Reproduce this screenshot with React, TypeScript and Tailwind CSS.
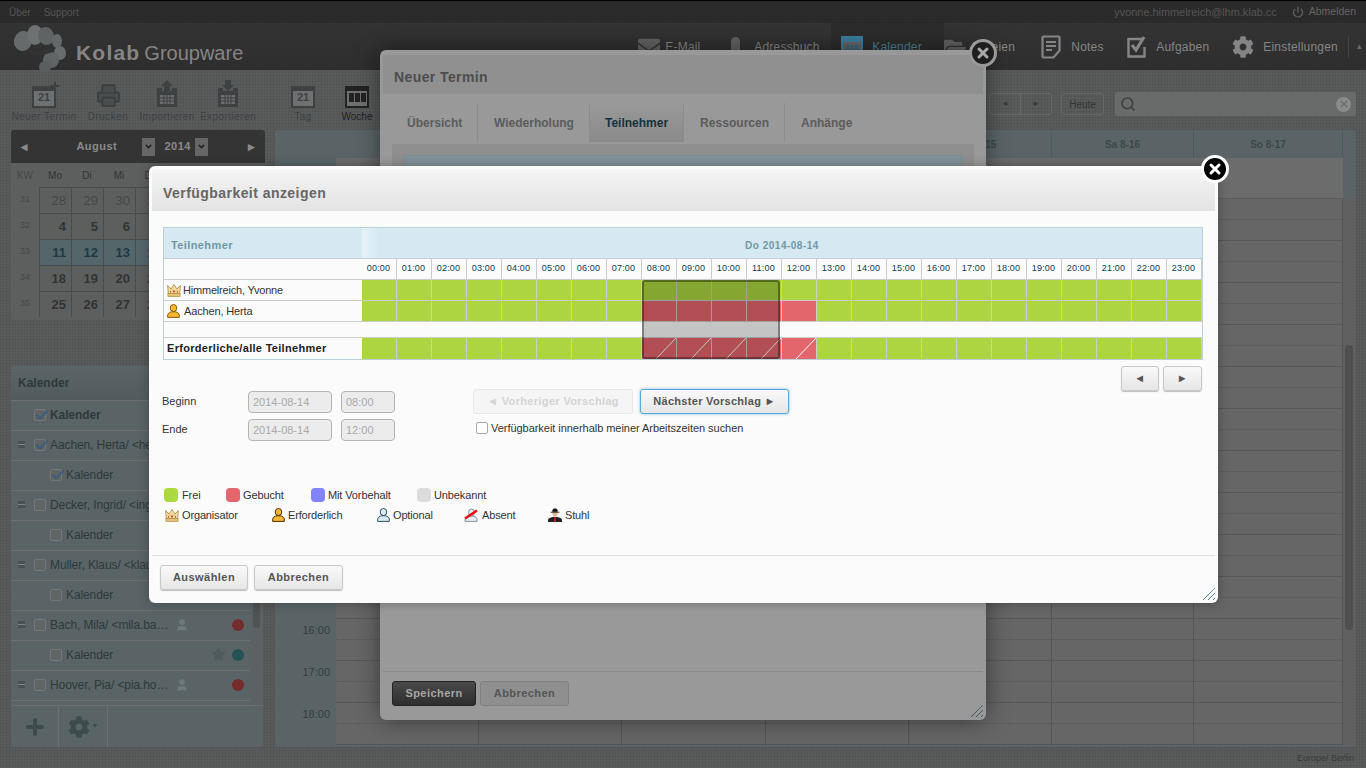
import { Check, Plus, Printer, Search, X, Star, User, Power, ChevronDown } from 'lucide-react'
import { FaCog, FaEnvelope, FaFolderOpen } from 'react-icons/fa'

const hours = Array.from({ length: 24 }, (_, i) => `${String(i).padStart(2, '0')}:00`)
const calendarRows = ['06', '07', '08', '09', '10', '11', '12', '13', '14', '15', '16', '17', '18']
const texture = 'bg-[linear-gradient(rgba(0,0,0,.05)_1px,transparent_1px),linear-gradient(90deg,rgba(0,0,0,.05)_1px,transparent_1px)] bg-[size:3px_3px]'

function Crown({ className = '' }: { className?: string }) {
  return (
    <svg viewBox="0 0 14 13" className={`h-[13px] w-[14px] ${className}`}>
      <path d="M.6 1.5L4 5 7 .6 10 5l3.4-3.5L12.6 10H1.4z" fill="#f3dca0" stroke="#b58f45" strokeWidth=".9" />
      <rect x=".9" y="9.6" width="12.2" height="3" fill="#e6c279" stroke="#a8853c" strokeWidth=".6" />
      <path d="M3 6.5h8" stroke="#e8c987" strokeWidth="1.5" />
      <circle cx="7" cy="7.5" r="1" fill="#c0392b" />
      <circle cx="3.6" cy="8" r=".7" fill="#c0392b" />
      <circle cx="10.4" cy="8" r=".7" fill="#c0392b" />
    </svg>
  )
}

function Person({ fill, stroke }: { fill: string; stroke: string }) {
  return (
    <svg viewBox="0 0 13 14" className="h-[14px] w-[13px]">
      <ellipse cx="6.5" cy="4" rx="3.3" ry="3.5" fill={fill} stroke={stroke} strokeWidth="1" />
      <path d="M.7 13.4v-2.2c0-2 2.4-3 3.6-3.4h4.4c1.2.4 3.6 1.4 3.6 3.4v2.2z" fill={fill} stroke={stroke} strokeWidth="1" />
    </svg>
  )
}

function Absent() {
  return (
    <svg viewBox="0 0 14 14" className="h-[14px] w-[14px]">
      <ellipse cx="7.5" cy="4.5" rx="3" ry="3.5" fill="#e4edf2" stroke="#6b7b85" strokeWidth=".8" />
      <path d="M1 13.4v-2c0-2 2.5-2.8 4-3.2h5c1.2.4 3 1.2 3 3.2v2z" fill="#e4edf2" stroke="#6b7b85" strokeWidth=".8" />
      <path d="M1 10.5L13 2.5" stroke="#ee0d0d" strokeWidth="2.4" />
    </svg>
  )
}

function Chair() {
  return (
    <svg viewBox="0 0 14 14" className="h-[14px] w-[14px]">
      <path d="M0 14v-2.2c0-1.5 2.6-2.3 4.5-2.8h5c1.9.5 4.5 1.3 4.5 2.8V14z" fill="#222" />
      <ellipse cx="7" cy="5.4" rx="2.6" ry="3" fill="#e5b894" />
      <path d="M2.6 3.8h8.8v.8H2.6z" fill="#111" />
      <path d="M4.2 3.8C4.2 1.6 5.2.6 7 .6s2.8 1 2.8 3.2z" fill="#111" />
      <path d="M6.2 9h1.6v5H6.2z" fill="#d21f1f" />
    </svg>
  )
}

function Logo() {
  return (
    <svg viewBox="0 0 56 50" className="h-[50px] w-[56px]">
      <ellipse cx="10" cy="17" rx="9" ry="10" transform="rotate(15 10 17)" fill="#666a6b" />
      <ellipse cx="22" cy="11" rx="8" ry="10" fill="#6e7172" />
      <ellipse cx="33" cy="12" rx="8" ry="9" transform="rotate(-20 33 12)" fill="#5f6364" />
      <ellipse cx="44" cy="17" rx="5" ry="7" fill="#656869" />
      <ellipse cx="47" cy="29" rx="6" ry="7" fill="#686c6d" />
      <ellipse cx="38" cy="36" rx="8" ry="8" fill="#606465" />
      <ellipse cx="32" cy="43" rx="6" ry="6" fill="#5a5e5f" />
      <path d="M16 25c6 4 13 3 20-1l3 4c-7 3-15 4-22 1z" fill="#343434" />
    </svg>
  )
}

function CalIcon({ dark = false, week = false }: { dark?: boolean; week?: boolean }) {
  return (
    <div className={`flex h-[22px] w-[24px] flex-col items-center border-2 border-t-[5px] ${dark ? 'border-[#222]' : 'border-[#3e4142]'} bg-[#6e7071]`}>
      {week ? (
        <div className="mt-[2px] flex gap-[1px]">
          <div className="h-[9px] w-[5px] bg-[#222]" />
          <div className="h-[9px] w-[5px] bg-[#222]" />
          <div className="h-[9px] w-[5px] bg-[#222]" />
        </div>
      ) : (
        <span className="text-[11px] leading-[13px] font-bold text-[#3e4142]">21</span>
      )}
    </div>
  )
}

function BlueCalIcon() {
  return (
    <svg viewBox="0 0 22 22" className="h-[22px] w-[22px]">
      <rect x="0" y="0" width="22" height="22" fill="#3c7d9c" />
      <rect x="2" y="6" width="18" height="14" fill="#666" />
      <path d="M4 10h14M4 13h14M4 16h14M7 9v9M11 9v9M15 9v9" stroke="#2f6780" strokeWidth="1.2" />
    </svg>
  )
}

function NotesIcon() {
  return (
    <svg viewBox="0 0 20 24" className="h-[24px] w-[20px]">
      <path d="M2.5 1.5h15a1 1 0 011 1v13l-6 7h-10a1 1 0 01-1-1v-19a1 1 0 011-1z" fill="none" stroke="#858585" strokeWidth="2.2" />
      <path d="M5 7h10M5 11h10M5 15h6" stroke="#858585" strokeWidth="2" />
    </svg>
  )
}

function TasksIcon() {
  return (
    <svg viewBox="0 0 21 22" className="h-[22px] w-[21px]">
      <path d="M15 3H1.5v17.500h16V11" fill="none" stroke="#858585" strokeWidth="2.4" />
      <path d="M5 9l4 5 8-13" fill="none" stroke="#858585" strokeWidth="3.2" />
    </svg>
  )
}

function ArrowCal({ up }: { up: boolean }) {
  return (
    <svg viewBox="0 0 22 28" className="h-[28px] w-[22px]">
      <path d={up ? 'M11 0l6 6h-3v5H8V6H5z' : 'M8 0h6v5h3l-6 6-6-6h3z'} fill="#3e4142" />
      <path d="M1 8h5v3h10V8h5v19H1z" fill="#3e4142" />
      <rect x="4" y="15" width="14" height="9" fill="#6b6d6e" />
      <path d="M4 18h14M4 21h14M8 15v9M11 15v9M14 15v9" stroke="#3e4142" strokeWidth="1" />
    </svg>
  )
}

function ToolItem({ label, icon, width, bold = false }: { label: string; icon: React.ReactNode; width: string; bold?: boolean }) {
  return (
    <div className={`flex flex-col items-center ${width}`}>
      <div className="flex h-[28px] items-end">{icon}</div>
      <span className={`mt-[3px] whitespace-nowrap text-[10px] leading-[12px] ${bold ? 'text-[#222]' : 'tracking-[0.45px] text-[#3e4142]'}`}>{label}</span>
    </div>
  )
}

function NavItem({ label, icon, width, gap = 'gap-[9px]', active = false }: { label: string; icon: React.ReactNode; width: string; gap?: string; active?: boolean }) {
  return (
    <div className={`flex h-[47px] items-center ${gap} ${width} ${active ? 'bg-[#2c2c2c] shadow-[-10px_0_0_#2c2c2c]' : ''}`}>
      {icon}
      <span className={`mt-[1px] text-[12px] tracking-[0.2px] ${active ? 'text-[#4f8296]' : 'text-[#858585]'}`}>{label}</span>
    </div>
  )
}

function CloseBtn({ className, dim = false }: { className: string; dim?: boolean }) {
  return (
    <div className={`absolute flex h-[28px] w-[28px] items-center justify-center rounded-full border-[3px] ${dim ? 'border-[#999] bg-[#1e1e1e]' : 'border-white bg-black'} ${className}`}>
      <X size={16} strokeWidth={4.5} color={dim ? '#aaa' : '#fff'} />
    </div>
  )
}

function Grip({ className, color }: { className: string; color: string }) {
  return (
    <svg viewBox="0 0 12 12" className={`absolute h-[12px] w-[12px] ${className}`}>
      <path d="M0 12L12 0M5 12l7-7M10 12l2-2" stroke={color} strokeWidth="1" strokeDasharray="1 .5" />
    </svg>
  )
}

function SideRow({ label, nested = false, top = false, checked = false, bold = false, person = false, star = false, dot }: {
  label: string; nested?: boolean; top?: boolean; checked?: boolean; bold?: boolean; person?: boolean; star?: boolean; dot?: string
}) {
  return (
    <div className="relative flex h-[30px] items-center border-t border-[#6c6f6d] bg-[#5a6466] pb-[2px] text-[12px] tracking-[-0.1px] text-[#2e393c]">
      {top && <div className="absolute left-[7px] top-[10px] h-[7px] w-[7px] bg-[#485153] after:mt-[3px] after:block after:h-[1px] after:bg-[#7d8587]" />}
      <div className={`relative h-[12px] w-[12px] shrink-0 rounded-[2px] border border-[#757778] bg-[#5f6465] ${nested ? 'ml-[39px]' : 'ml-[23px]'}`}>
        {checked && <Check size={16} strokeWidth={3} color="#3d5c7a" className="absolute -top-[3px] -left-[1px]" />}
      </div>
      <span className={`ml-[4px] max-w-[120px] truncate ${bold ? 'font-bold' : ''}`}>{label}</span>
      {person && <User size={14} fill="#6f7a7c" color="#6f7a7c" className="absolute left-[164px]" />}
      {star && <Star size={15} fill="#4f5b5d" color="#4f5b5d" className="absolute left-[200px]" />}
      {dot && <div className={`absolute left-[221px] h-[12px] w-[12px] rounded-full ${dot}`} />}
    </div>
  )
}

function Swatch({ color, label, width, gap = 'gap-[3px]' }: { color: string; label: string; width: string; gap?: string }) {
  return (
    <div className={`flex items-center ${gap} ${width}`}>
      <div className={`h-[14px] w-[14px] rounded-[4px] ${color}`} />
      <span className="tracking-[-0.12px]">{label}</span>
    </div>
  )
}

function Role({ icon, label, width, gap = 'gap-[3px]' }: { icon: React.ReactNode; label: string; width: string; gap?: string }) {
  return (
    <div className={`flex items-center ${gap} ${width}`}>
      {icon}
      <span className="tracking-[-0.15px]">{label}</span>
    </div>
  )
}

const grayBtn = 'rounded-[3px] border border-[#c8c8c8] bg-gradient-to-b from-[#f9f9f9] to-[#e6e6e6] text-[11px] font-bold tracking-[0.45px] text-[#555] shadow-[0_1px_1px_rgba(0,0,0,.25)]'

function AvailabilityTable() {
  return (
    <div className="relative w-[1040px] border border-[#bdd0da]">
      <div className="flex h-[30px] bg-[#d6e9f2]">
        <div className="flex w-[198px] items-center pl-[7px] pt-[4px] text-[11px] font-bold tracking-[0.4px] text-[#6f98a6]">Teilnehmer</div>
        <div className="flex flex-1 items-center justify-center bg-gradient-to-r from-[#e6f2f7] to-[#d6e9f2] to-[2%] pt-[4px] text-[10px] font-bold tracking-[0.5px] text-[#6f98a6]">Do 2014-08-14</div>
      </div>
      <div className="flex h-[22px] border-t border-b border-[#ccc]">
        <div className="w-[198px]" />
        {hours.map(h => (
          <div key={h} className="flex w-[35px] items-center justify-center border-r border-[#ccc] pr-[1px] text-[9px] tracking-[0.2px] text-[#0a3d52]">{h}</div>
        ))}
      </div>
      <GridRow name={<><Crown /><span className="ml-[2px] tracking-[-0.2px]">Himmelreich, Yvonne</span></>} />
      <GridRow name={<><Person fill="#f7b733" stroke="#8a5a00" /><span className="ml-[4px] tracking-[-0.15px]">Aachen, Herta</span></>} busy />
      <div className="h-[16px] border-b border-[#ccc]" />
      <GridRow name={<span className="text-[11px] font-bold tracking-[0.3px] text-[#222]">Erforderliche/alle Teilnehmer</span>} busy slash last />
      <div className="absolute left-[478px] top-[52px] h-[79px] w-[138px] rounded-[3px] border-2 border-[rgba(0,0,0,.36)] bg-[rgba(0,0,0,.22)]" />
    </div>
  )
}

function GridRow({ name, busy = false, slash = false, last = false }: { name: React.ReactNode; busy?: boolean; slash?: boolean; last?: boolean }) {
  return (
    <div className={`flex h-[21px] border-[#ccc] ${last ? 'border-b-0' : 'border-b'}`}>
      <div className="flex w-[198px] items-center whitespace-nowrap pl-[3px] text-[11px] text-[#333]">{name}</div>
      {hours.map((h, i) => {
        const red = busy && i >= 8 && i <= 12
        return (
          <div key={h} className={`relative w-[35px] border-r border-[#ccc] ${red ? 'bg-[#e4666d]' : 'bg-[#acd540]'}`}>
            {red && slash && (
              <svg viewBox="0 0 34 21" className="absolute inset-0 h-full w-full">
                <path d="M14 21L34 0" stroke="#fff" strokeWidth="1" />
              </svg>
            )}
          </div>
        )
      })}
    </div>
  )
}

function AvailabilityDialog() {
  return (
    <div className="absolute left-[149px] top-[166px] h-[437px] w-[1069px] rounded-[6px] bg-[#fbfbfb] pt-[3px] text-[11px] text-[#333] shadow-[0_0_12px_rgba(0,0,0,.3)]">
      <CloseBtn className="-right-[11px] -top-[11px]" />
      <div className="mx-[3px] flex h-[42px] items-center bg-gradient-to-b from-[#f4f4f4] to-[#e3e3e3] pl-[11px] pt-[6px] text-[14px] font-bold tracking-[0.45px] text-[#666]">Verfügbarkeit anzeigen</div>
      <div className="pl-[14px] pt-[16px]">
        <AvailabilityTable />
        <div className="mt-[6px] flex justify-end gap-[4px] pr-[16px]">
          <div className={`flex h-[25px] w-[38px] items-center justify-center ${grayBtn}`}>◄</div>
          <div className={`flex h-[25px] w-[39px] items-center justify-center ${grayBtn}`}>►</div>
        </div>
        <div className="-ml-[1px] flex items-start">
          <div className="flex flex-col gap-[6px]">
            {[['Beginn', '08:00'], ['Ende', '12:00']].map(([label, time]) => (
              <div key={label} className="flex h-[22px] items-center">
                <span className="w-[86px] -translate-y-[1px]">{label}</span>
                <div className="flex h-[22px] w-[84px] items-center rounded-[4px] border border-[#b4b4b4] bg-[#ececec] pl-[4px] text-[#aaa]">2014-08-14</div>
                <div className="ml-[9px] flex h-[22px] w-[54px] items-center rounded-[4px] border border-[#b4b4b4] bg-[#ececec] pl-[4px] text-[#aaa]">{time}</div>
              </div>
            ))}
          </div>
          <div className="ml-[78px] -mt-[2px]">
            <div className="flex gap-[7px]">
              <div className="flex h-[25px] w-[160px] items-center justify-center rounded-[3px] border border-[#e8e8e8] bg-[#f5f5f5] text-[11px] font-bold tracking-[0.35px] text-[#d4d4d4]">◄ Vorheriger Vorschlag</div>
              <div className="flex h-[25px] w-[149px] items-center justify-center rounded-[3px] border border-[#58a9d6] bg-gradient-to-b from-[#f9f9f9] to-[#e6e6e6] text-[11px] font-bold tracking-[0.3px] text-[#555] shadow-[0_0_3px_rgba(71,160,210,.7)]">Nächster Vorschlag ►</div>
            </div>
            <div className="mt-[6px] ml-[3px] flex items-center gap-[3px]">
              <div className="h-[12px] w-[12px] rounded-[2px] border border-[#aaa] bg-white" />
              <span className="tracking-[-0.04px]">Verfügbarkeit innerhalb meiner Arbeitszeiten suchen</span>
            </div>
          </div>
        </div>
        <div className="mt-[47px] flex h-[14px] items-center pl-[1px]">
          <Swatch color="bg-[#acd93f]" label="Frei" width="w-[62px]" gap="gap-[4px]" />
          <Swatch color="bg-[#e4666d]" label="Gebucht" width="w-[85px]" />
          <Swatch color="bg-[#8383fb]" label="Mit Vorbehalt" width="w-[106px]" />
          <Swatch color="bg-[#dcdcdc]" label="Unbekannt" width="w-[100px]" />
        </div>
        <div className="mt-[6px] flex h-[14px] items-center pl-[3px]">
          <Role icon={<Crown className="-ml-[1px]" />} label="Organisator" width="w-[106px]" />
          <Role icon={<Person fill="#f7b733" stroke="#4a3000" />} label="Erforderlich" width="w-[105px]" />
          <Role icon={<Person fill="#d9eaf3" stroke="#31505e" />} label="Optional" width="w-[87px]" />
          <Role icon={<Absent />} label="Absent" width="w-[84px]" gap="gap-[4px]" />
          <Role icon={<Chair />} label="Stuhl" width="w-[80px]" />
        </div>
      </div>
      <div className="mx-[3px] mt-[33px] h-px bg-[#dedede]" />
      <div className="flex gap-[6px] pl-[11px] pt-[9px]">
        <div className={`flex h-[25px] w-[88px] items-center justify-center ${grayBtn}`}>Auswählen</div>
        <div className={`flex h-[25px] w-[89px] items-center justify-center ${grayBtn}`}>Abbrechen</div>
      </div>
      <Grip className="bottom-[3px] right-[3px]" color="#14475c" />
    </div>
  )
}

function AppointmentDialog() {
  return (
    <div className="absolute left-[380px] top-[50px] h-[670px] w-[606px] rounded-[6px] bg-[#999] pt-[5px] shadow-[0_0_24px_rgba(0,0,0,.45)]">
      <CloseBtn className="-right-[11px] -top-[11px]" dim />
      <div className="mx-[3px] flex h-[39px] items-center bg-[#909090] pl-[11px] pt-[5px] text-[14px] font-bold tracking-[0.4px] text-[#4d4d4d]">Neuer Termin</div>
      <div className="mt-[9px] flex h-[41px] items-center px-[11px] pb-[2px] text-[12px] font-bold text-[#5c5c5c]">
        <div className="flex h-full w-[87px] items-center border-r border-[#8c8c8c] pl-[16px]">Übersicht</div>
        <div className="flex h-full w-[112px] items-center border-r border-[#8c8c8c] pl-[16px]">Wiederholung</div>
        <div className="flex h-full w-[94px] items-center border-r border-[#8c8c8c] bg-gradient-to-b from-[#999] to-[#8a8a8a] pl-[15px] text-[#15323d]">Teilnehmer</div>
        <div className="flex h-full w-[101px] items-center border-r border-[#8c8c8c] pl-[16px] tracking-[0.05px]">Ressourcen</div>
        <div className="flex h-full items-center pl-[16px]">Anhänge</div>
      </div>
      <div className="mx-[12px] h-[60px] bg-[#8f8f8f] px-[12px] pt-[11px]">
        <div className="h-[40px] border border-[#7b8f98] bg-[#83939a]" />
      </div>
      <div className="mx-[3px] mt-[467px] h-px bg-[#888]" />
      <div className="flex gap-[4px] pl-[12px] pt-[9px] text-[11px] font-bold tracking-[0.45px]">
        <div className="flex h-[25px] w-[84px] items-center justify-center rounded-[3px] border border-[#222] bg-gradient-to-b from-[#4a4a4a] to-[#2e2e2e] text-[#a5a5a5]">Speichern</div>
        <div className="flex h-[25px] w-[89px] items-center justify-center rounded-[3px] border border-[#808080] bg-[#8f8f8f] text-[#555]">Abbrechen</div>
      </div>
      <Grip className="bottom-[3px] right-[3px]" color="#1e3c49" />
    </div>
  )
}

function MiniCalendar() {
  const weeks = [
    ['31', ['28', '29', '30', '31', '1', '2', '3']],
    ['32', ['4', '5', '6', '7', '8', '9', '10']],
    ['33', ['11', '12', '13', '14', '15', '16', '17']],
    ['34', ['18', '19', '20', '21', '22', '23', '24']],
    ['35', ['25', '26', '27', '28', '29', '30', '31']],
  ] as [string, string[]][]
  return (
    <div className="h-[190px] w-[254px] overflow-hidden rounded-[3px] bg-[#5d5f5f]">
      <div className="flex h-[33px] items-center bg-[#343434] px-[7px] text-[11px] font-bold tracking-[0.5px] text-[#8a8a8a]">
        <span className="text-[12px]">◄</span>
        <span className="ml-[46px] w-[66px]">August</span>
        <div className="flex h-[18px] w-[13px] items-center justify-center bg-[#666]"><ChevronDown size={9} strokeWidth={4} color="#222" /></div>
        <span className="ml-[9px]">2014</span>
        <div className="ml-[4px] flex h-[18px] w-[13px] items-center justify-center bg-[#666]"><ChevronDown size={9} strokeWidth={4} color="#222" /></div>
        <span className="ml-auto text-[12px]">►</span>
      </div>
      <div className="flex h-[24px] items-center text-[10px] text-[#333]">
        <span className="w-[28px] text-center text-[#454747]">KW</span>
        {['Mo', 'Di', 'Mi', 'Do', 'Fr', 'Sa', 'So'].map(d => (
          <span key={d} className="w-[32px] text-center">{d}</span>
        ))}
      </div>
      {weeks.map(([kw, days], w) => (
        <div key={kw} className="flex h-[26px] items-center">
          <span className="w-[28px] text-center text-[9px] text-[#454747]">{kw}</span>
          {days.map(d => (
            <div key={d} className={`flex h-[26px] w-[32px] items-center justify-end border-t border-l border-[#4a4c4c] pr-[5px] text-[13px] ${w === 0 ? 'text-[#454747]' : 'font-bold text-[#333]'} ${w === 2 ? 'bg-[#55666b] text-[#203942]' : ''}`}>{d}</div>
          ))}
        </div>
      ))}
    </div>
  )
}

function CalendarList() {
  return (
    <div className="mt-[46px] flex h-[381px] w-[252px] flex-col overflow-hidden rounded-[3px] bg-[#5c6163]">
      <div className="flex h-[34px] items-center bg-gradient-to-b from-[#5b6567] to-[#525c5f] pl-[7px] text-[12px] font-bold text-[#2e393c]">Kalender</div>
      <div className="relative flex h-[305px]">
        <div className="w-[239px] overflow-hidden">
          <SideRow label="Kalender" bold checked />
          <SideRow label="Aachen, Herta/ <herta.aachen@lhm" top checked />
          <SideRow label="Kalender" nested checked />
          <SideRow label="Decker, Ingrid/ <ingrid.decker@lhm" top />
          <SideRow label="Kalender" nested />
          <SideRow label="Muller, Klaus/ <klaus.muller@lhm" top />
          <SideRow label="Kalender" nested />
          <SideRow label="Bach, Mila/ <mila.bach@lhm" top person dot="bg-[#752c2c]" />
          <SideRow label="Kalender" nested star dot="bg-[#255254]" />
          <SideRow label="Hoover, Pia/ <pia.hoover@lhm" top person dot="bg-[#752c2c]" />
          <SideRow label="" nested />
        </div>
        <div className="absolute right-[3px] top-[150px] h-[78px] w-[7px] rounded-b-[4px] bg-[#4f5354]" />
      </div>
      <div className="flex h-[42px] border-t border-[#6c6f6d] bg-[#5a6466]">
        <div className="flex w-[48px] items-center justify-center border-r border-[#6c6f6d]"><Plus size={24} strokeWidth={4} color="#3e4b4e" /></div>
        <div className="flex w-[49px] items-center justify-center gap-[2px] border-r border-[#6c6f6d]"><FaCog size={22} color="#3e4b4e" /><span className="text-[7px] text-[#3e4b4e]">▼</span></div>
      </div>
    </div>
  )
}

function WeekGrid() {
  const colW = ['w-[143px]', 'w-[143px]', 'w-[144px]', 'w-[143px]', 'w-[143px]', 'w-[142px]', 'w-[149px]']
  const labels = ['Mo 8-11', 'Di 8-12', 'Mi 8-13', 'Do 8-14', 'Fr 8-15', 'Sa 8-16', 'So 8-17']
  return (
    <div className="ml-[10px] flex h-[617px] w-[1081px] flex-col overflow-hidden rounded-[3px] bg-[#5a6466]">
      <div className="flex h-[28px] pl-[61px] text-[10px] font-bold text-[#3d484a]">
        {labels.map((l, i) => (
          <div key={l} className={`flex items-center justify-center border-r border-[#4f5a5c] ${colW[i]}`}>{l}</div>
        ))}
      </div>
      <div className="flex h-[41px] pl-[61px]">
        <div className="w-[1007px] border-b border-[#5c5c5c] bg-[#6c6c6c]" />
      </div>
      <div className="flex">
        <div className="w-[61px] text-right text-[11px] text-[#333d3f]">
          {calendarRows.map(r => (
            <div key={r} className="h-[42px] pr-[6px] pt-[3px]">{r}:00</div>
          ))}
        </div>
        <div className="flex w-[1007px] bg-[#666]">
          {colW.map((w, i) => (
            <div key={i} className={`border-r border-[#555] ${w}`}>
              {calendarRows.map(r => (
                <div key={r} className="h-[42px] border-b border-[#585858]">
                  <div className="h-[21px] border-b border-dotted border-[#565656]" />
                </div>
              ))}
            </div>
          ))}
        </div>
        <div className="relative w-[13px] bg-[#606060]">
          <div className="absolute left-[2px] top-[146px] h-[285px] w-[8px] rounded-[4px] bg-[#4f4f4f]" />
        </div>
      </div>
    </div>
  )
}

export default function App() {
  return (
    <div className={`relative h-[768px] w-[1366px] overflow-hidden bg-[#5a5c5c] font-['Liberation_Sans',Arial,sans-serif] ${texture}`}>
      <div className={`flex h-[23px] items-center border-t border-black bg-[#2c2c2c] pl-[9px] pr-[10px] text-[10px] text-[#555] ${texture}`}>
        <span>Über</span>
        <span className="ml-[13px]">Support</span>
        <span className="ml-auto text-[10.900px]">yvonne.himmelreich@lhm.klab.cc</span>
        <Power size={12} strokeWidth={2.5} color="#666" className="ml-[15px]" />
        <span className="ml-[5px] text-[10.500px] text-[#666]">Abmelden</span>
      </div>
      <div className="flex h-[47px] items-center bg-gradient-to-b from-[#333] to-[#2e2e2e]">
        <div className="ml-[13px] mt-[5px]"><Logo /></div>
        <span className="ml-[7px] mt-[13px] text-[21px] font-bold tracking-[1.2px] text-[#858585]">Kolab</span>
        <span className="ml-[4px] mt-[13px] text-[20px] text-[#858585]">Groupware</span>
        <div className="ml-[395px] flex">
          <NavItem label="E-Mail" icon={<FaEnvelope size={22} color="#626262" />} width="w-[93px]" gap="gap-[5px]" />
          <NavItem label="Adressbuch" icon={<div className="h-[20px] w-[9px] rounded-t-[5px] bg-[#626262]" />} width="w-[110px]" gap="gap-[14px]" />
          <NavItem label="Kalender" icon={<BlueCalIcon />} width="w-[103px]" active />
          <NavItem label="Dateien" icon={<FaFolderOpen size={22} color="#626262" />} width="w-[97px]" gap="gap-[6px]" />
          <NavItem label="Notes" icon={<NotesIcon />} width="w-[86px]" gap="gap-[10px]" />
          <NavItem label="Aufgaben" icon={<TasksIcon />} width="w-[105px]" gap="gap-[8px]" />
          <NavItem label="Einstellungen" icon={<FaCog size={22} color="#858585" />} width="w-[116px]" />
          <div className="flex items-center gap-[6px] text-[8px] text-[#666]">
            <div className="h-[22px] w-px bg-[#444]" />
            <span>▲</span>
          </div>
        </div>
      </div>
      <div className="flex h-[60px] items-start pt-[10px]">
        <div className="ml-[12px] flex">
          <ToolItem label="Neuer Termin" width="w-[64px]" icon={<div className="relative"><CalIcon /><Plus size={12} strokeWidth={4} color="#3e4142" className="absolute -right-[5px] -top-[6px]" /></div>} />
          <ToolItem label="Drucken" width="w-[64px]" icon={<Printer size={25} color="#3e4142" fill="#4b4e4f" strokeWidth={2} />} />
          <ToolItem label="Importieren" width="w-[54px]" icon={<ArrowCal up />} />
          <ToolItem label="Exportieren" width="w-[68px]" icon={<ArrowCal up={false} />} />
          <ToolItem label="Tag" width="w-[82px]" icon={<CalIcon />} />
          <ToolItem label="Woche" width="w-[26px]" bold icon={<CalIcon dark week />} />
        </div>
        <div className="ml-auto mr-[10px] mt-[12px] flex items-center gap-[9px]">
          <div className="flex h-[22px] w-[63px] rounded-[3px] border border-[#666] text-[8px] text-[#3a3a3a]">
            <div className="flex flex-1 items-center justify-center border-r border-[#666]">◄</div>
            <div className="flex flex-1 items-center justify-center">►</div>
          </div>
          <div className="flex h-[22px] w-[43px] items-center justify-center rounded-[3px] border border-[#666] text-[10px] text-[#333]">Heute</div>
          <div className="ml-[2px] flex h-[24px] w-[241px] items-center justify-between rounded-[3px] bg-[#696b6b] px-[5px]">
            <Search size={16} strokeWidth={2.5} color="#3e4142" />
            <div className="flex h-[15px] w-[15px] items-center justify-center rounded-full bg-[#8a8a8a]"><X size={10} strokeWidth={3} color="#696b6b" /></div>
          </div>
        </div>
      </div>
      <div className="flex pl-[11px]">
        <div className="w-[254px]">
          <MiniCalendar />
          <CalendarList />
        </div>
        <WeekGrid />
      </div>
      <div className="flex justify-end pr-[12px] pt-[5px] text-[9px] text-[#3a3a3a]">Europe/ Berlin</div>
      <AppointmentDialog />
      <AvailabilityDialog />
    </div>
  )
}
